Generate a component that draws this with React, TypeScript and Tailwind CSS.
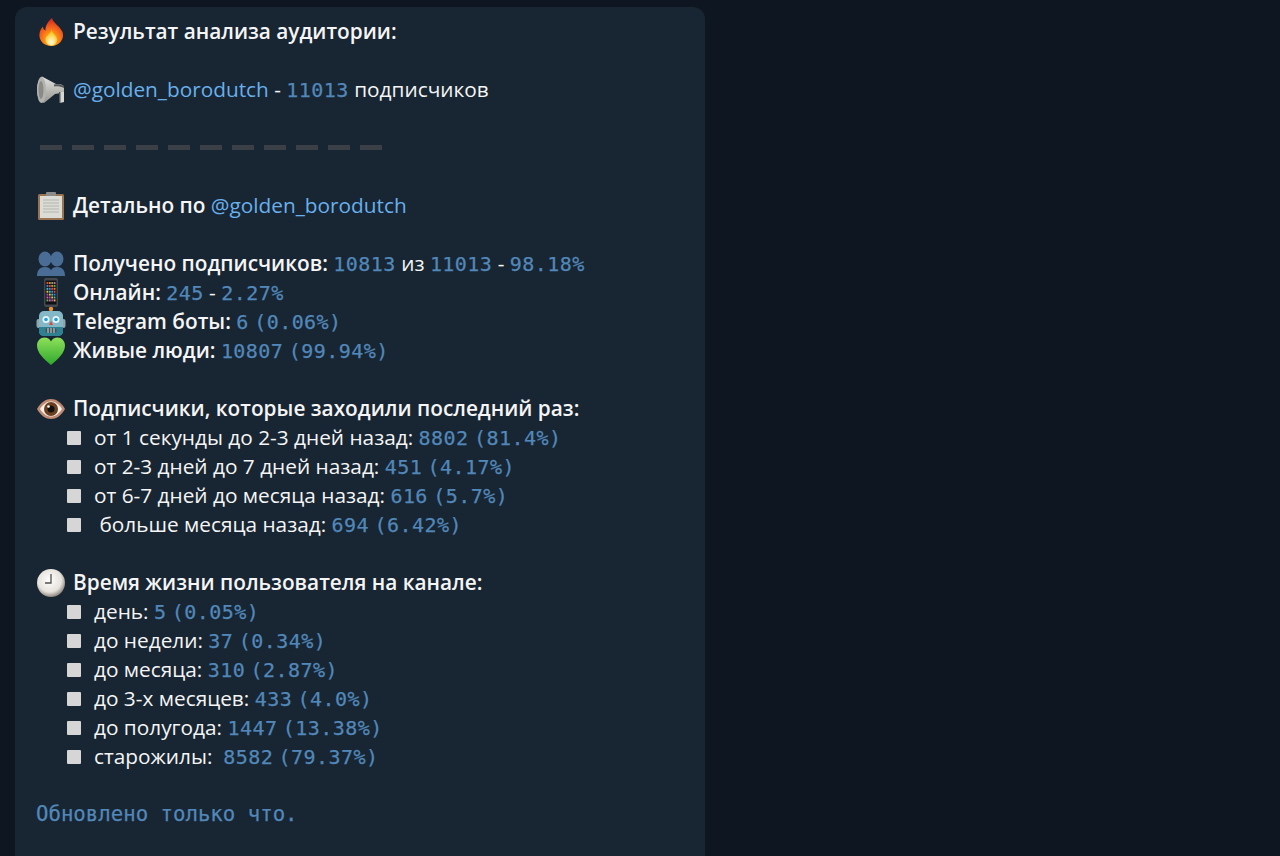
import type { ReactNode } from "react"

const Fire = () => (
  <svg viewBox="0 0 30 30" className="h-[30px] w-[30px] shrink-0">
    <defs>
      <radialGradient id="fireOuter" cx="50%" cy="80%" r="75%">
        <stop offset="0%" stopColor="#ffd000" />
        <stop offset="55%" stopColor="#f8701c" />
        <stop offset="100%" stopColor="#d9281e" />
      </radialGradient>
      <radialGradient id="fireInner" cx="50%" cy="78%" r="60%">
        <stop offset="0%" stopColor="#fffbe0" />
        <stop offset="100%" stopColor="#ffc81f" />
      </radialGradient>
    </defs>
    <path d="M16 1c1 5 8 8 10.500 14 2.500 7-3.500 14-11 14S2.500 23.500 3.500 16.500c.5-3 1.500-5 3.500-7 0 2 1 3.500 2.500 4C9 9 12 4.500 16 1z" fill="url(#fireOuter)" />
    <path d="M15.500 13c.5 3 5.500 5.500 5.500 9.500 0 3.500-2.500 6-5.500 6s-6-2.500-6-6c0-3.500 5-5.500 6-9.500z" fill="url(#fireInner)" />
  </svg>
)

const Megaphone = () => (
  <svg viewBox="0 0 30 30" className="h-[30px] w-[30px] shrink-0">
    <defs>
      <linearGradient id="hornBody" x1="0" y1="0" x2="0" y2="1">
        <stop offset="0%" stopColor="#e2e2e0" />
        <stop offset="100%" stopColor="#96968f" />
      </linearGradient>
    </defs>
    <path d="M6 1.500L20 9l5 .5c2 .5 3 1.500 3 3v4c0 1-1 1.500-3 1.500l-6 1-11 9C3 27 1 20 1 15S3 3 6 1.500z" fill="url(#hornBody)" />
    <ellipse cx="5.500" cy="15" rx="4.500" ry="13" fill="#b2b2ae" />
    <ellipse cx="5" cy="15" rx="2.500" ry="9" fill="#8a8a86" />
    <path d="M18 9.500c3-.5 7-.5 10 1.500v2c-3-1.500-7-2-10-1.500z" fill="#55565a" />
    <path d="M23 17h5v10l-4 1z" fill="#d6d6d2" />
    <path d="M23 17h1.500v11H23z" fill="#55565a" />
  </svg>
)

const Clipboard = () => (
  <svg viewBox="0 0 30 30" className="h-[30px] w-[30px] shrink-0">
    <rect x="2" y="3" width="26" height="26" rx="1.500" fill="#9a7350" />
    <rect x="4" y="5" width="22" height="22" fill="#dcdcd6" />
    <rect x="10" y="1" width="10" height="4" rx="1" fill="#8c8c8c" />
    <path d="M7 9h16M7 12h16M7 15h16M7 18h16M7 21h16" stroke="#b4b4ae" strokeWidth="1" />
  </svg>
)

const Busts = () => (
  <svg viewBox="0 0 30 30" className="h-[30px] w-[30px] shrink-0">
    <g fill="#4a6d95">
      <ellipse cx="9" cy="10" rx="6.500" ry="7.500" />
      <path d="M1 27c0-6 3-9 8-9s7 3 7 9z" />
      <ellipse cx="21" cy="10" rx="6.500" ry="7.500" />
      <path d="M14 27c0-6 2-9 7-9s8 3 8 9z" />
    </g>
  </svg>
)

const Phone = () => {
  const colors = ["#e04b3c", "#f2c230", "#4bb85a", "#3a8de0", "#a050d0", "#e88030", "#40c0c0", "#e060a0"]
  const cells: ReactNode[] = []
  for (let r = 0; r < 7; r++) {
    for (let c = 0; c < 4; c++) {
      cells.push(<rect key={`${r}-${c}`} x={10.500 + c * 2.400} y={4 + r * 2.900} width="1.800" height="2" fill={colors[(r * 3 + c * 5) % 8]} />)
    }
  }
  return (
    <svg viewBox="0 0 30 30" className="h-[30px] w-[30px] shrink-0">
      <rect x="8" y="0" width="14" height="29" rx="2" fill="#45484d" />
      <rect x="9.500" y="2.500" width="11" height="24" fill="#101116" />
      {cells}
    </svg>
  )
}

const Robot = () => (
  <svg viewBox="0 0 30 30" className="h-[30px] w-[30px] shrink-0">
    <circle cx="15" cy="2" r="2.200" fill="#f09030" />
    <rect x="0.500" y="12" width="4" height="9" rx="2" fill="#8fa4ac" />
    <rect x="25.500" y="12" width="4" height="9" rx="2" fill="#8fa4ac" />
    <rect x="3" y="4" width="24" height="25" rx="5" fill="#85b8c6" />
    <path d="M3 20h24v4c0 3-2 5-5 5H8c-3 0-5-2-5-5z" fill="#2f8090" />
    <circle cx="10" cy="12.500" r="3.500" fill="#e8f6fa" />
    <circle cx="20" cy="12.500" r="3.500" fill="#e8f6fa" />
    <circle cx="10" cy="12.500" r="1.800" fill="#26a0d8" />
    <circle cx="20" cy="12.500" r="1.800" fill="#26a0d8" />
    <path d="M15 14l2 4h-4z" fill="#d9483c" />
    <rect x="9.500" y="21" width="11" height="5" rx="1.500" fill="#3f5660" />
    <path d="M12 21v5M15 21v5M18 21v5" stroke="#cfd8dc" strokeWidth="1" />
  </svg>
)

const Heart = () => (
  <svg viewBox="0 0 30 30" className="h-[30px] w-[30px] shrink-0">
    <defs>
      <linearGradient id="heartFill" x1="0" y1="0" x2="0" y2="1">
        <stop offset="0%" stopColor="#8ee05a" />
        <stop offset="100%" stopColor="#2fa82c" />
      </linearGradient>
    </defs>
    <path d="M15 29C8 23 1 17 1 9.500 1 5 4.500 1.500 8.500 1.500c3 0 5.200 1.500 6.500 4 1.300-2.500 3.500-4 6.500-4 4 0 7.500 3.500 7.500 8C29 17 22 23 15 29z" fill="url(#heartFill)" />
  </svg>
)

const Eye = () => (
  <svg viewBox="0 0 30 30" className="h-[30px] w-[30px] shrink-0">
    <path d="M1 15C5 8 10 5 15 5s10 3 14 10c-4 7-9 10-14 10S5 22 1 15z" fill="#c08a70" />
    <path d="M4 15c3-5 7-7.500 11-7.500S23 10 26 15c-3 5-7 7.500-11 7.500S7 20 4 15z" fill="#f4f0ec" />
    <circle cx="15" cy="15" r="7" fill="#6b3f1f" />
    <circle cx="15" cy="15" r="3.500" fill="#111" />
    <circle cx="12.500" cy="12.500" r="1.300" fill="#fff" />
  </svg>
)

const Clock = () => (
  <svg viewBox="0 0 30 30" className="h-[30px] w-[30px] shrink-0">
    <defs>
      <radialGradient id="clockFace" cx="45%" cy="40%" r="60%">
        <stop offset="0%" stopColor="#ffffff" />
        <stop offset="70%" stopColor="#e6e2dc" />
        <stop offset="100%" stopColor="#8d8780" />
      </radialGradient>
    </defs>
    <circle cx="15" cy="15" r="14" fill="url(#clockFace)" />
    <path d="M15 6v9H9" stroke="#55504c" strokeWidth="1.300" fill="none" />
  </svg>
)

// spaces come from the body font, only the digits are monospaced
const Mono = ({ text }: { text: string }) => (
  <>
    {text.split(" ").map((part, i) => (
      <span key={i}>
        {i > 0 && " "}
        <span className="font-['DejaVu_Sans_Mono',monospace] text-[20px] tracking-[0.45px] text-[#5288b9] [-webkit-text-stroke:0.25px_#5288b9]">{part}</span>
      </span>
    ))}
  </>
)

const Link = ({ children }: { children: ReactNode }) => <span className="text-[#68b0ec]">{children}</span>

const Row = ({ icon, children }: { icon?: ReactNode; children?: ReactNode }) => (
  <div className="flex h-[29px] items-center whitespace-pre">
    {icon && <span className="mr-[7px] flex">{icon}</span>}
    {children}
  </div>
)

const Bullet = ({ label, value }: { label: string; value: string }) => (
  <div className="flex h-[29px] items-center whitespace-pre pl-[31px]">
    <span className="mr-[13px] h-[14px] w-[14px] shrink-0 rounded-[1px] bg-[#d6d6d6]" />
    <span>{label} </span>
    <Mono text={value} />
  </div>
)

const lastSeen = [
  ["от 1 секунды до 2-3 дней назад:", "8802 (81.4%)"],
  ["от 2-3 дней до 7 дней назад:", "451 (4.17%)"],
  ["от 6-7 дней до месяца назад:", "616 (5.7%)"],
  [" больше месяца назад:", "694 (6.42%)"],
]

const lifetime = [
  ["день:", "5 (0.05%)"],
  ["до недели:", "37 (0.34%)"],
  ["до месяца:", "310 (2.87%)"],
  ["до 3-х месяцев:", "433 (4.0%)"],
  ["до полугода:", "1447 (13.38%)"],
  ["старожилы: ", "8582 (79.37%)"],
]

export default function App() {
  return (
    <div className="h-[856px] overflow-hidden bg-[#0e1621] pl-[15px] pt-[7px] font-['Open_Sans',sans-serif] text-[20.8px] text-[#f5f5f5]">
      <div className="h-[849px] w-[690px] rounded-t-xl bg-[#182533] pl-[21px] pt-[10px]">
        <Row icon={<Fire />}>
          <b className="font-semibold">Результат анализа аудитории:</b>
        </Row>
        <Row />
        <Row icon={<Megaphone />}>
          <Link>@golden_borodutch</Link>
          <span> - </span>
          <Mono text="11013" />
          <span> подписчиков</span>
        </Row>
        <Row />
        <div className="flex h-[29px] items-center gap-[10px] pl-[4px]">
          {Array.from({ length: 11 }, (_, i) => (
            <span key={i} className="h-[5px] w-[22px] bg-[#3b4047]" />
          ))}
        </div>
        <Row />
        <Row icon={<Clipboard />}>
          <b className="font-semibold">Детально по </b>
          <Link>@golden_borodutch</Link>
        </Row>
        <Row />
        <Row icon={<Busts />}>
          <b className="font-semibold">Получено подписчиков: </b>
          <Mono text="10813" />
          <span> из </span>
          <Mono text="11013" />
          <span> - </span>
          <Mono text="98.18%" />
        </Row>
        <Row icon={<Phone />}>
          <b className="font-semibold">Онлайн: </b>
          <Mono text="245" />
          <span> - </span>
          <Mono text="2.27%" />
        </Row>
        <Row icon={<Robot />}>
          <b className="font-semibold">Telegram боты: </b>
          <Mono text="6 (0.06%)" />
        </Row>
        <Row icon={<Heart />}>
          <b className="font-semibold">Живые люди: </b>
          <Mono text="10807 (99.94%)" />
        </Row>
        <Row />
        <Row icon={<Eye />}>
          <b className="font-semibold">Подписчики, которые заходили последний раз:</b>
        </Row>
        {lastSeen.map(([label, value]) => (
          <Bullet key={label} label={label} value={value} />
        ))}
        <Row />
        <Row icon={<Clock />}>
          <b className="font-semibold">Время жизни пользователя на канале:</b>
        </Row>
        {lifetime.map(([label, value]) => (
          <Bullet key={label} label={label} value={value} />
        ))}
        <Row />
        <Row>
          <span className="font-['DejaVu_Sans_Mono',monospace] text-[20.7px] text-[#5288b9] [-webkit-text-stroke:0.25px_#5288b9]">Обновлено только что.</span>
        </Row>
      </div>
    </div>
  )
}
